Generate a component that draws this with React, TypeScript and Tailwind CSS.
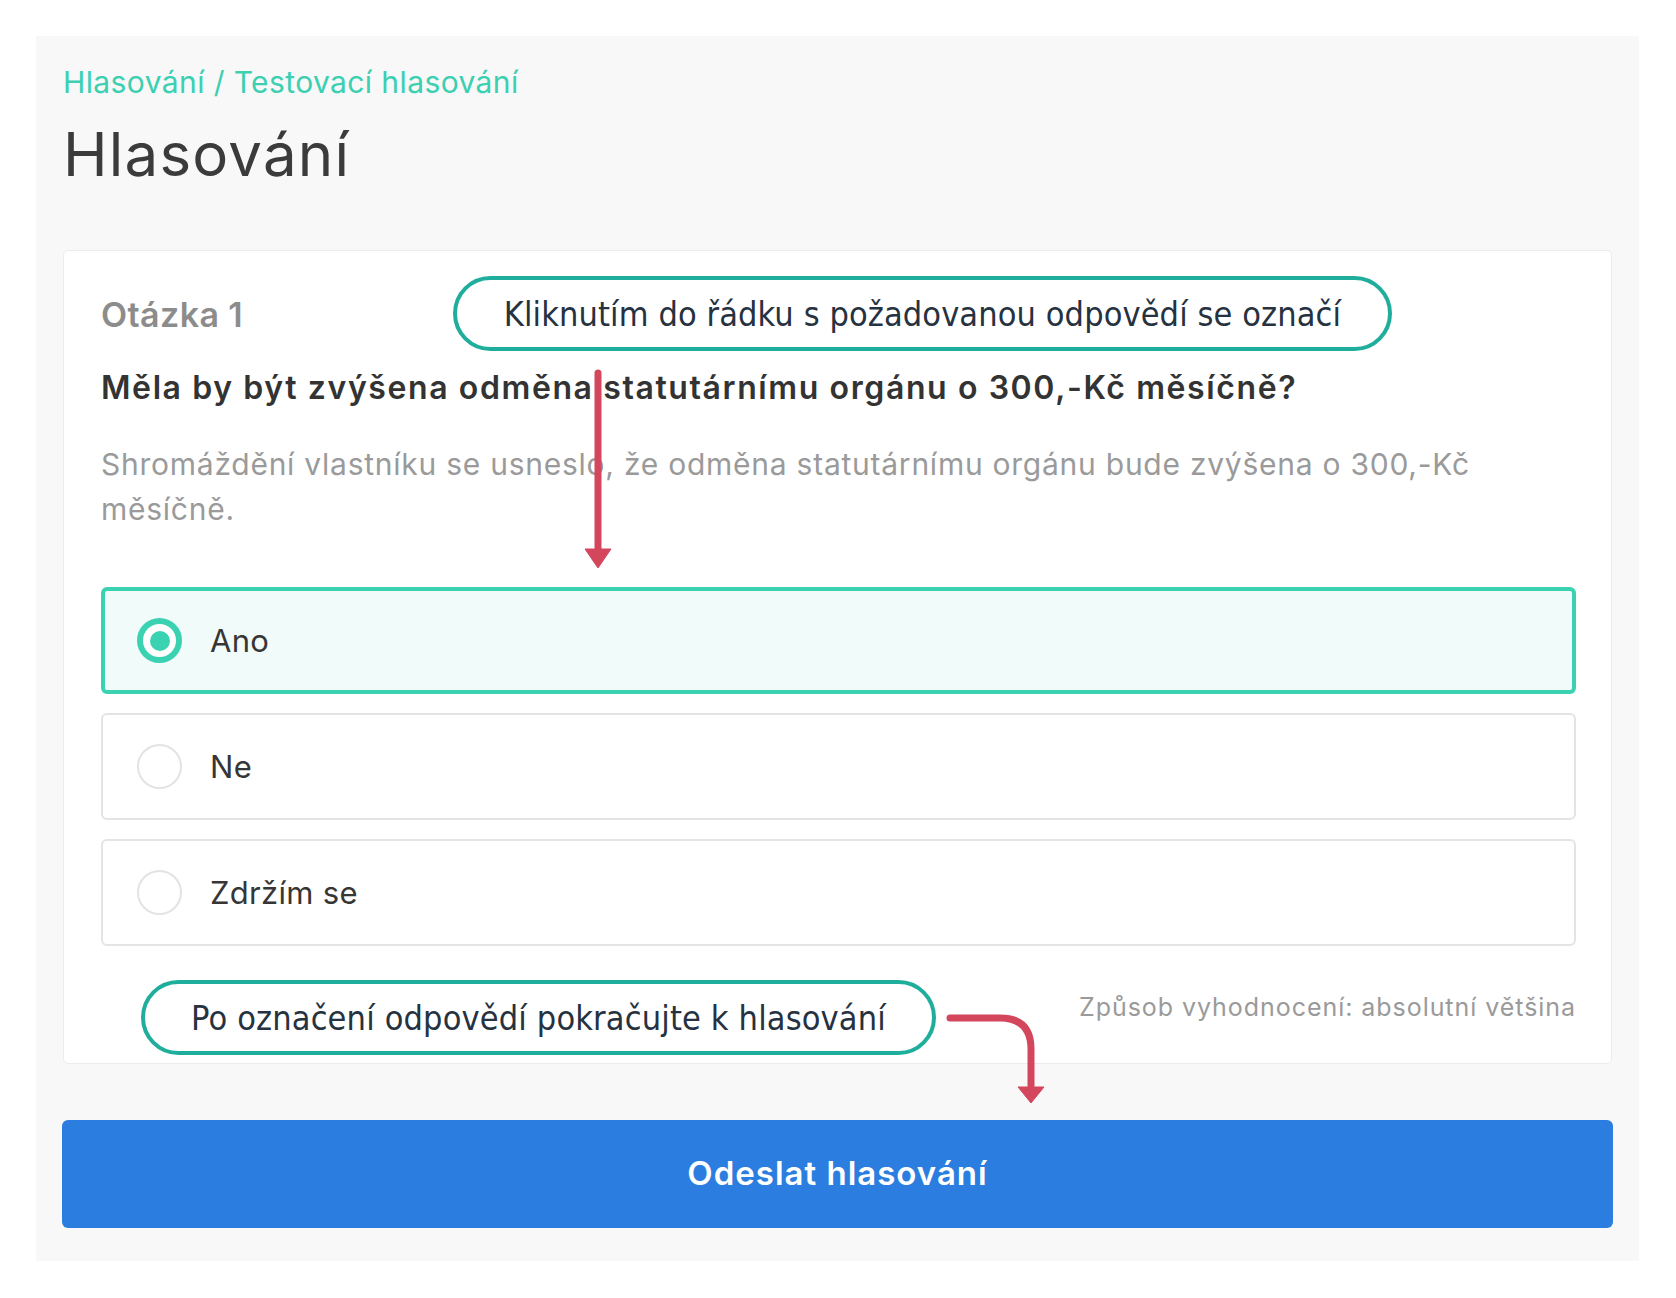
import React from "react";

function Radio({ checked }: { checked: boolean }) {
  if (checked) {
    return (
      <span className="flex h-[45px] w-[45px] shrink-0 items-center justify-center rounded-full border-[6px] border-[#3bd2b2] bg-white">
        <span className="h-[20px] w-[20px] rounded-full bg-[#3bd2b2]" />
      </span>
    );
  }
  return <span className="h-[45px] w-[45px] shrink-0 rounded-full border-2 border-[#e3e3e3] bg-white" />;
}

function Option({ label, checked }: { label: string; checked?: boolean }) {
  return (
    <div
      className={
        checked
          ? "flex h-[107px] items-center gap-[28px] rounded-[6px] border-4 border-[#3bd2b2] bg-[#f1fbf9] pl-[32px]"
          : "flex h-[107px] items-center gap-[28px] rounded-[6px] border-2 border-[#e4e4e4] bg-white pl-[34px]"
      }
    >
      <Radio checked={!!checked} />
      <span className="text-[31px] leading-[40px] tracking-[0.3px] text-[#363636]">{label}</span>
    </div>
  );
}

export default function App() {
  const callout =
    "absolute flex items-center justify-center rounded-full border-4 border-[#1fae9c] bg-white text-[#26323f]";
  const condensed = { fontFamily: "'Liberation Sans Narrow', 'DejaVu Sans Condensed', 'Roboto Condensed', sans-serif" };
  return (
    <div className="relative min-h-[1298px] w-[1676px] bg-white pl-[36px] pt-[36px]" style={{ fontFamily: "Inter, 'Open Sans', sans-serif" }}>
      <div className="w-[1603px] bg-[#f8f8f8] px-[26px] pb-[33px] pt-[26px]">
        <div className="pl-[1px] text-[30px] leading-[40px] tracking-[0.4px] text-[#3ccfb2]">Hlasování / Testovací hlasování</div>
        <h1 className="mt-[17px] pl-[1px] text-[60px] leading-[70px] tracking-[1.2px] text-[#3b3b3b]">Hlasování</h1>

        <div className="mx-[1px] mt-[61px] rounded-[5px] border border-[#ececec] bg-white pb-[41px] pl-[37px] pr-[35px] pt-[44px]">
          <div className="text-[34px] font-semibold leading-[40px] tracking-[0.4px] text-[#8c8c8c]">Otázka 1</div>
          <div className="mt-[33px] text-[32px] font-semibold leading-[40px] tracking-[1.6px] text-[#333333]">
            Měla by být zvýšena odměna statutárnímu orgánu o 300,-Kč měsíčně?
          </div>
          <p className="mt-[34px] text-[30px] leading-[45px] tracking-[0.75px] text-[#9a9a9a]">
            Shromáždění vlastníku se usneslo, že odměna statutárnímu orgánu bude zvýšena o 300,-Kč
            <br />
            měsíčně.
          </p>
          <div className="mt-[55px] flex flex-col gap-[19px]">
            <Option label="Ano" checked />
            <Option label="Ne" />
            <Option label="Zdržím se" />
          </div>
          <div className="mt-[46px] text-right text-[25px] leading-[30px] tracking-[0.95px] text-[#9a9a9a]">
            Způsob vyhodnocení: absolutní většina
          </div>
        </div>

        <button className="mt-[56px] flex h-[108px] w-full items-center justify-center rounded-[6px] bg-[#2b7de0] text-[33px] font-semibold tracking-[1px] text-white">
          Odeslat hlasování
        </button>
      </div>

      {/* annotations */}
      <div className={callout + " left-[453px] top-[276px] h-[75px] w-[939px]"} style={condensed}>
        <span className="text-[34px] leading-none tracking-[0.1px]">Kliknutím do řádku s požadovanou odpovědí se označí</span>
      </div>
      <div className={callout + " left-[141px] top-[980px] h-[75px] w-[795px]"} style={condensed}>
        <span className="text-[34px] leading-none tracking-[0.15px]">Po označení odpovědí pokračujte k hlasování</span>
      </div>
      <svg className="pointer-events-none absolute left-0 top-0" width="1676" height="1298">
        <line x1="598" y1="373" x2="598" y2="552" stroke="#d4465c" strokeWidth="7" strokeLinecap="round" />
        <polygon points="585,549 611,549 598,568" fill="#d4465c" strokeLinejoin="round" stroke="#d4465c" strokeWidth="1" />
        <path d="M950 1018 H1000 Q1031 1018 1031 1049 V1090" fill="none" stroke="#d4465c" strokeWidth="7" strokeLinecap="round" />
        <polygon points="1018,1087 1044,1087 1031,1103" fill="#d4465c" stroke="#d4465c" strokeWidth="1" strokeLinejoin="round" />
      </svg>
    </div>
  );
}
